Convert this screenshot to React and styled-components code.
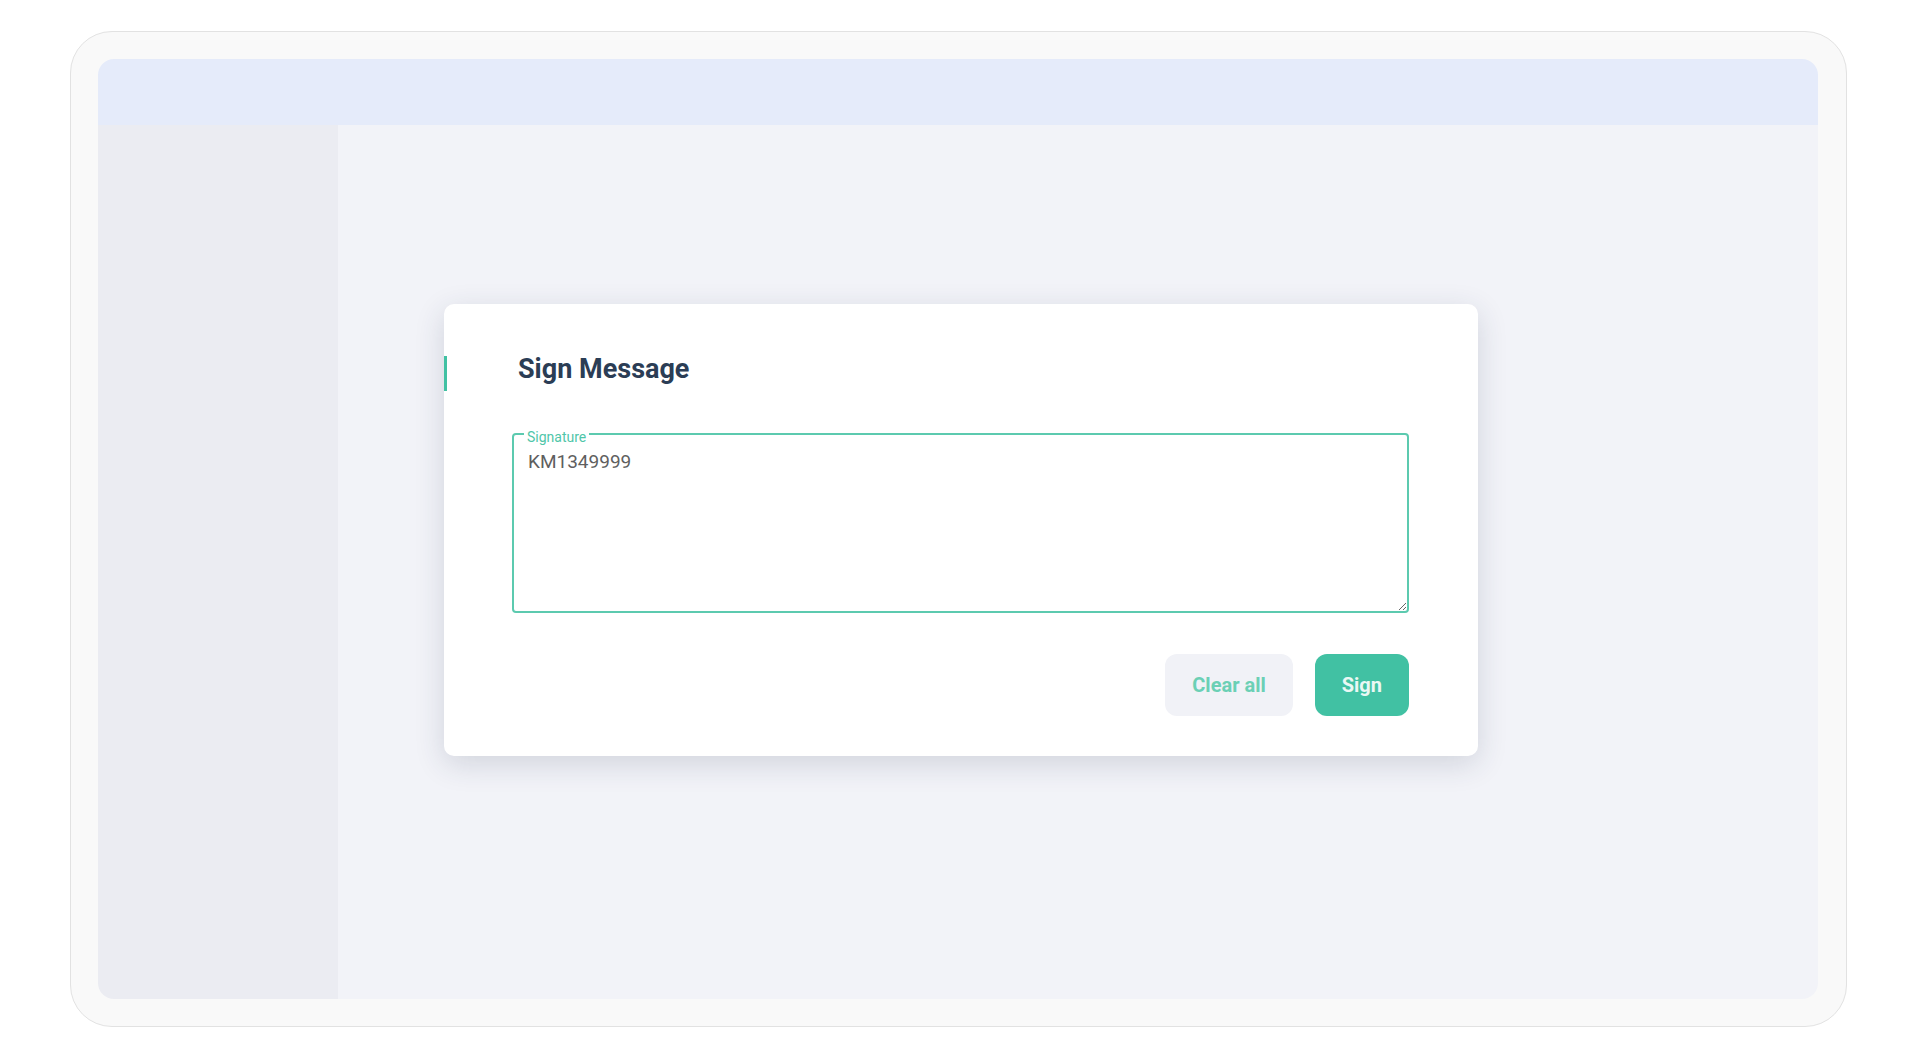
import { useEffect, useRef } from 'react'
import styled, { createGlobalStyle } from 'styled-components'

const GlobalStyle = createGlobalStyle`
  * { box-sizing: border-box; }
  body {
    margin: 0;
    background: #ffffff;
    font-family: Roboto, "Liberation Sans", sans-serif;
  }
`

const Frame = styled.div`
  width: 1777px;
  height: 996px;
  margin: 31px 0 0 70px;
  padding: 27px 28px 27px 27px;
  background: #f9f9f9;
  border: 1px solid #e2e2e2;
  border-radius: 42px;
`

const Window = styled.div`
  position: relative;
  height: 100%;
  display: flex;
  flex-direction: column;
  border-radius: 16px;
  overflow: hidden;
`

const TopBar = styled.div`
  height: 66px;
  flex-shrink: 0;
  background: #e5ebfa;
`

const Body = styled.div`
  flex: 1;
  display: flex;
`

const Sidebar = styled.div`
  width: 240px;
  background: #ebecf2;
`

const Main = styled.div`
  flex: 1;
  background: #f2f3f8;
`

// dialog floats over the whole app window
const Overlay = styled.div`
  position: absolute;
  inset: 0;
  display: flex;
  align-items: center;
  justify-content: center;
  padding: 2px 0 0 6px;
`

const Modal = styled.div`
  width: 1034px;
  padding: 49px 69px 40px 68px;
  background: #ffffff;
  border-radius: 10px;
  box-shadow: 0 8px 30px rgba(40, 48, 80, 0.16);
`

const Header = styled.div`
  display: flex;
  align-items: flex-start;
  margin-left: -68px;
  height: 46px;
`

const Accent = styled.span`
  width: 3px;
  height: 35px;
  margin-top: 3px;
  background: #41c1a3;
`

const Title = styled.h2`
  margin: 0 0 0 71px;
  font-size: 27px;
  line-height: 32px;
  font-weight: 700;
  color: #2b3d55;
`

const Field = styled.div`
  position: relative;
  margin-top: 34px;
  display: flex;
`

const Label = styled.label`
  position: absolute;
  top: -3px;
  left: 12px;
  padding: 0 3px;
  background: #ffffff;
  font-size: 14px;
  line-height: 14px;
  color: #4fc6a9;
`

const TextArea = styled.textarea`
  width: 100%;
  height: 180px;
  padding: 16px 14px 13px;
  border: 2px solid #5ccaaf;
  border-radius: 4px;
  outline: none;
  resize: vertical;
  font-family: Roboto, "Liberation Sans", sans-serif;
  font-size: 19px;
  line-height: 22px;
  color: #5f5f5f;
  caret-color: #41c1a3;
`

const Footer = styled.div`
  display: flex;
  justify-content: flex-end;
  gap: 22px;
  margin-top: 41px;
`

const Button = styled.button`
  height: 62px;
  padding: 0 27px;
  border: none;
  border-radius: 12px;
  font-family: Roboto, "Liberation Sans", sans-serif;
  font-size: 20px;
  font-weight: 700;
  cursor: pointer;
  background: ${(p) => (p.$primary ? '#41c1a3' : '#f1f2f7')};
  color: ${(p) => (p.$primary ? '#eaf8f4' : '#6bd0b5')};
`

const App = () => {
  const ref = useRef(null)

  useEffect(() => {
    const el = ref.current
    if (el) {
      el.focus()
      el.setSelectionRange(el.value.length, el.value.length)
    }
  }, [])

  return (
    <>
      <GlobalStyle />
      <Frame>
        <Window>
          <TopBar />
          <Body>
            <Sidebar />
            <Main />
          </Body>
          <Overlay>
            <Modal>
              <Header>
                <Accent />
                <Title>Sign Message</Title>
              </Header>
              <Field>
                <Label htmlFor="signature">Signature</Label>
                <TextArea id="signature" ref={ref} defaultValue="KM1349999" />
              </Field>
              <Footer>
                <Button>Clear all</Button>
                <Button $primary>Sign</Button>
              </Footer>
            </Modal>
          </Overlay>
        </Window>
      </Frame>
    </>
  )
}

export default App
